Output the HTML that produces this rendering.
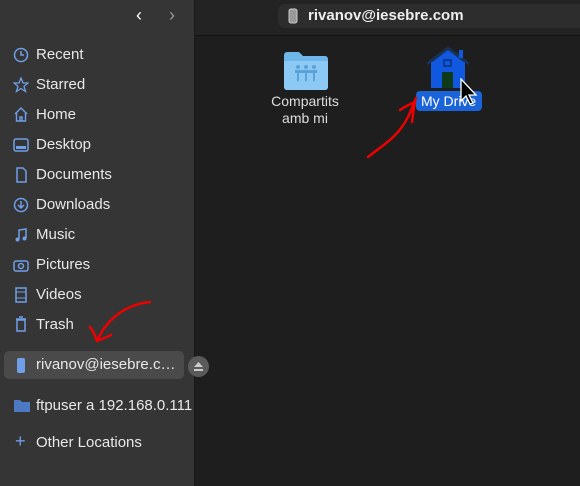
<!DOCTYPE html><html><head><style>
body{margin:0;width:580px;height:486px;overflow:hidden;background:#1e1e1e;font-family:"Liberation Sans","DejaVu Sans",sans-serif;position:relative}
.sb{position:absolute;left:0;top:0;width:194px;height:486px;background:#353535;border-right:1px solid #1a1a1a}
.hdr{position:absolute;left:195px;top:0;width:385px;height:35px;background:#232323;border-bottom:1px solid #111}
.pill{position:absolute;left:278px;top:4px;width:310px;height:24px;background:#2d2d2d;border-radius:7px}
.it{position:absolute;left:36px;color:#e8e8e8;font-size:15px}
.ic{position:absolute;left:13px}
</style></head><body>
<div class="sb">
<div style="position:absolute;left:-10px;top:-14px;width:36px;height:30px;border-radius:50%;border:3px solid #3cc46a;border-right-color:transparent;border-bottom-color:transparent"></div>
<div style="position:absolute;left:136px;top:5px;color:#fff;font-size:18px">&#8249;</div>
<div style="position:absolute;left:169px;top:5px;color:#999;font-size:18px">&#8250;</div>
<div class="it" style="top:46px">Recent</div><svg class="ic" style="top:47px" width="16" height="16"><circle cx="8" cy="8" r="6.5" fill="none" stroke="#6f9fe8" stroke-width="1.5"/><path d="M8 4v4h3" stroke="#6f9fe8" stroke-width="1.5" fill="none"/></svg>
<div class="it" style="top:76px">Starred</div><svg class="ic" style="top:77px" width="16" height="16"><path d="M8 1l2 5h5l-4 3.3 1.6 5.2L8 11.5 3.4 14.5 5 9.3 1 6h5z" fill="none" stroke="#6f9fe8" stroke-width="1.3"/></svg>
<div class="it" style="top:106px">Home</div><svg class="ic" style="top:106px" width="16" height="16"><path d="M2 8L8 2l6 6M3.5 7v8h9V7M7 15v-4h2v4" fill="none" stroke="#6f9fe8" stroke-width="1.4"/></svg>
<div class="it" style="top:136px">Desktop</div><svg class="ic" style="top:138px" width="16" height="14"><rect x="1" y="1" width="14" height="12" rx="2" fill="none" stroke="#6f9fe8" stroke-width="1.5"/><rect x="3" y="8" width="10" height="3" fill="#6f9fe8"/></svg>
<div class="it" style="top:166px">Documents</div><svg class="ic" style="top:167px" width="16" height="16"><path d="M4 1h6l3 3v11H4z" fill="none" stroke="#6f9fe8" stroke-width="1.5"/></svg>
<div class="it" style="top:196px">Downloads</div><svg class="ic" style="top:197px" width="16" height="16"><circle cx="8" cy="8" r="6.5" fill="none" stroke="#6f9fe8" stroke-width="1.5"/><path d="M8 4v7M5 8l3 3 3-3" stroke="#6f9fe8" stroke-width="1.5" fill="none"/></svg>
<div class="it" style="top:226px">Music</div><svg class="ic" style="top:227px" width="16" height="16"><path d="M6 12V3l7-1v9" fill="none" stroke="#6f9fe8" stroke-width="1.5"/><circle cx="4.5" cy="12.5" r="2" fill="#6f9fe8"/><circle cx="11.5" cy="11.5" r="2" fill="#6f9fe8"/></svg>
<div class="it" style="top:256px">Pictures</div><svg class="ic" style="top:258px" width="16" height="14"><rect x="1" y="3" width="14" height="10" rx="2" fill="none" stroke="#6f9fe8" stroke-width="1.5"/><circle cx="8" cy="8" r="2.5" fill="none" stroke="#6f9fe8" stroke-width="1.5"/></svg>
<div class="it" style="top:286px">Videos</div><svg class="ic" style="top:287px" width="16" height="16"><rect x="3" y="1" width="10" height="14" fill="none" stroke="#6f9fe8" stroke-width="1.5"/><path d="M3 5h10M3 11h10" stroke="#6f9fe8"/></svg>
<div class="it" style="top:316px">Trash</div><svg class="ic" style="top:316px" width="16" height="16"><path d="M4 4h8v11H4zM3 3h10M6 1h4" fill="none" stroke="#6f9fe8" stroke-width="1.5"/></svg>
<div style="position:absolute;left:4px;top:351px;width:180px;height:28px;background:#4a4a4a;border-radius:5px"></div>
<div class="it" style="top:356px">rivanov@iesebre.c…</div><svg class="ic" style="top:357px" width="16" height="16"><rect x="4" y="1" width="8" height="15" rx="2" fill="#6f9fe8"/></svg>
<div style="position:absolute;left:188px;top:356px;width:21px;height:21px;border-radius:50%;background:#5a5a5a"></div>
<svg style="position:absolute;left:191px;top:359px" width="15" height="15"><path d="M3 8l4.5-5 4.5 5z M3 10h9v2H3z" fill="#ccc"/></svg>
<div class="it" style="top:397px">ftpuser a 192.168.0.111</div><svg class="ic" style="top:397px" width="18" height="16"><path d="M1 3h6l2 2h8v10H1z" fill="#4d78c2"/></svg>
<div class="it" style="top:434px">Other Locations</div><div style="position:absolute;left:15px;top:431px;color:#6f9fe8;font-size:18px">+</div>
</div>
<div class="hdr"></div>
<div class="pill"></div>
<svg style="position:absolute;left:288px;top:8px" width="10" height="16"><rect x="1" y="1" width="8" height="14" rx="2" fill="#999" stroke="#ccc"/></svg>
<div style="position:absolute;left:308px;top:7px;color:#eee;font-size:15px;font-weight:bold">rivanov@iesebre.com</div>
<svg style="position:absolute;left:284px;top:52px" width="44" height="38"><path d="M0 3a3 3 0 013-3h12l4 4h22a3 3 0 013 3v28a3 3 0 01-3 3H3a3 3 0 01-3-3z" fill="#6eb5ea"/><path d="M0 9h44v26a3 3 0 01-3 3H3a3 3 0 01-3-3z" fill="#8ccaf5"/><g fill="#5aa2d8"><circle cx="14" cy="15" r="2"/><circle cx="22" cy="15" r="2"/><circle cx="30" cy="15" r="2"/><path d="M11 18h22v3H11zM13 21h2v8h-2zM21 21h2v8h-2zM29 21h2v8h-2z"/></g></svg>
<div style="position:absolute;left:250px;top:93px;width:110px;text-align:center;color:#ddd;font-size:14px;line-height:17px">Compartits<br>amb mi</div>
<svg style="position:absolute;left:425px;top:46px" width="46" height="44"><path d="M2 18L23 2l21 16" fill="#123" stroke="#1a3050" stroke-width="3"/><rect x="34" y="4" width="4" height="8" fill="#1158e0"/><rect x="6" y="16" width="34" height="26" fill="#1158e0"/><path d="M23 4L6 17h34z" fill="#1158e0"/><rect x="19" y="14" width="7" height="6" fill="none" stroke="#0a2e7a" stroke-width="1.5"/><rect x="17" y="26" width="11" height="16" fill="#0d3a18"/></svg>
<div style="position:absolute;left:416px;top:91px;width:66px;height:20px;background:#1a63d8;border-radius:4px"></div>
<div style="position:absolute;left:421px;top:93px;color:#fff;font-size:14px">My Drive</div>
<svg style="position:absolute;left:460px;top:78px" width="20" height="28"><path d="M1 1v22l5-5 4 8 3-1-4-8h7z" fill="#000" stroke="#fff" stroke-width="1.3"/></svg>
<svg style="position:absolute;left:0;top:0" width="580" height="486" fill="none" stroke="#e00" stroke-width="2.5" stroke-linecap="round"><path d="M368 157c15-12 30-20 40-40 4-8 6-15 8-19M400 110c6-4 10-6 15-8M415 102c-1 5-2 12-3 20"/><path d="M150 302c-20 2-35 12-45 25-4 5-6 10-8 14M97 341c-2-6-4-10-7-14M97 341c5-2 10-4 14-6"/></svg>
</body></html>
